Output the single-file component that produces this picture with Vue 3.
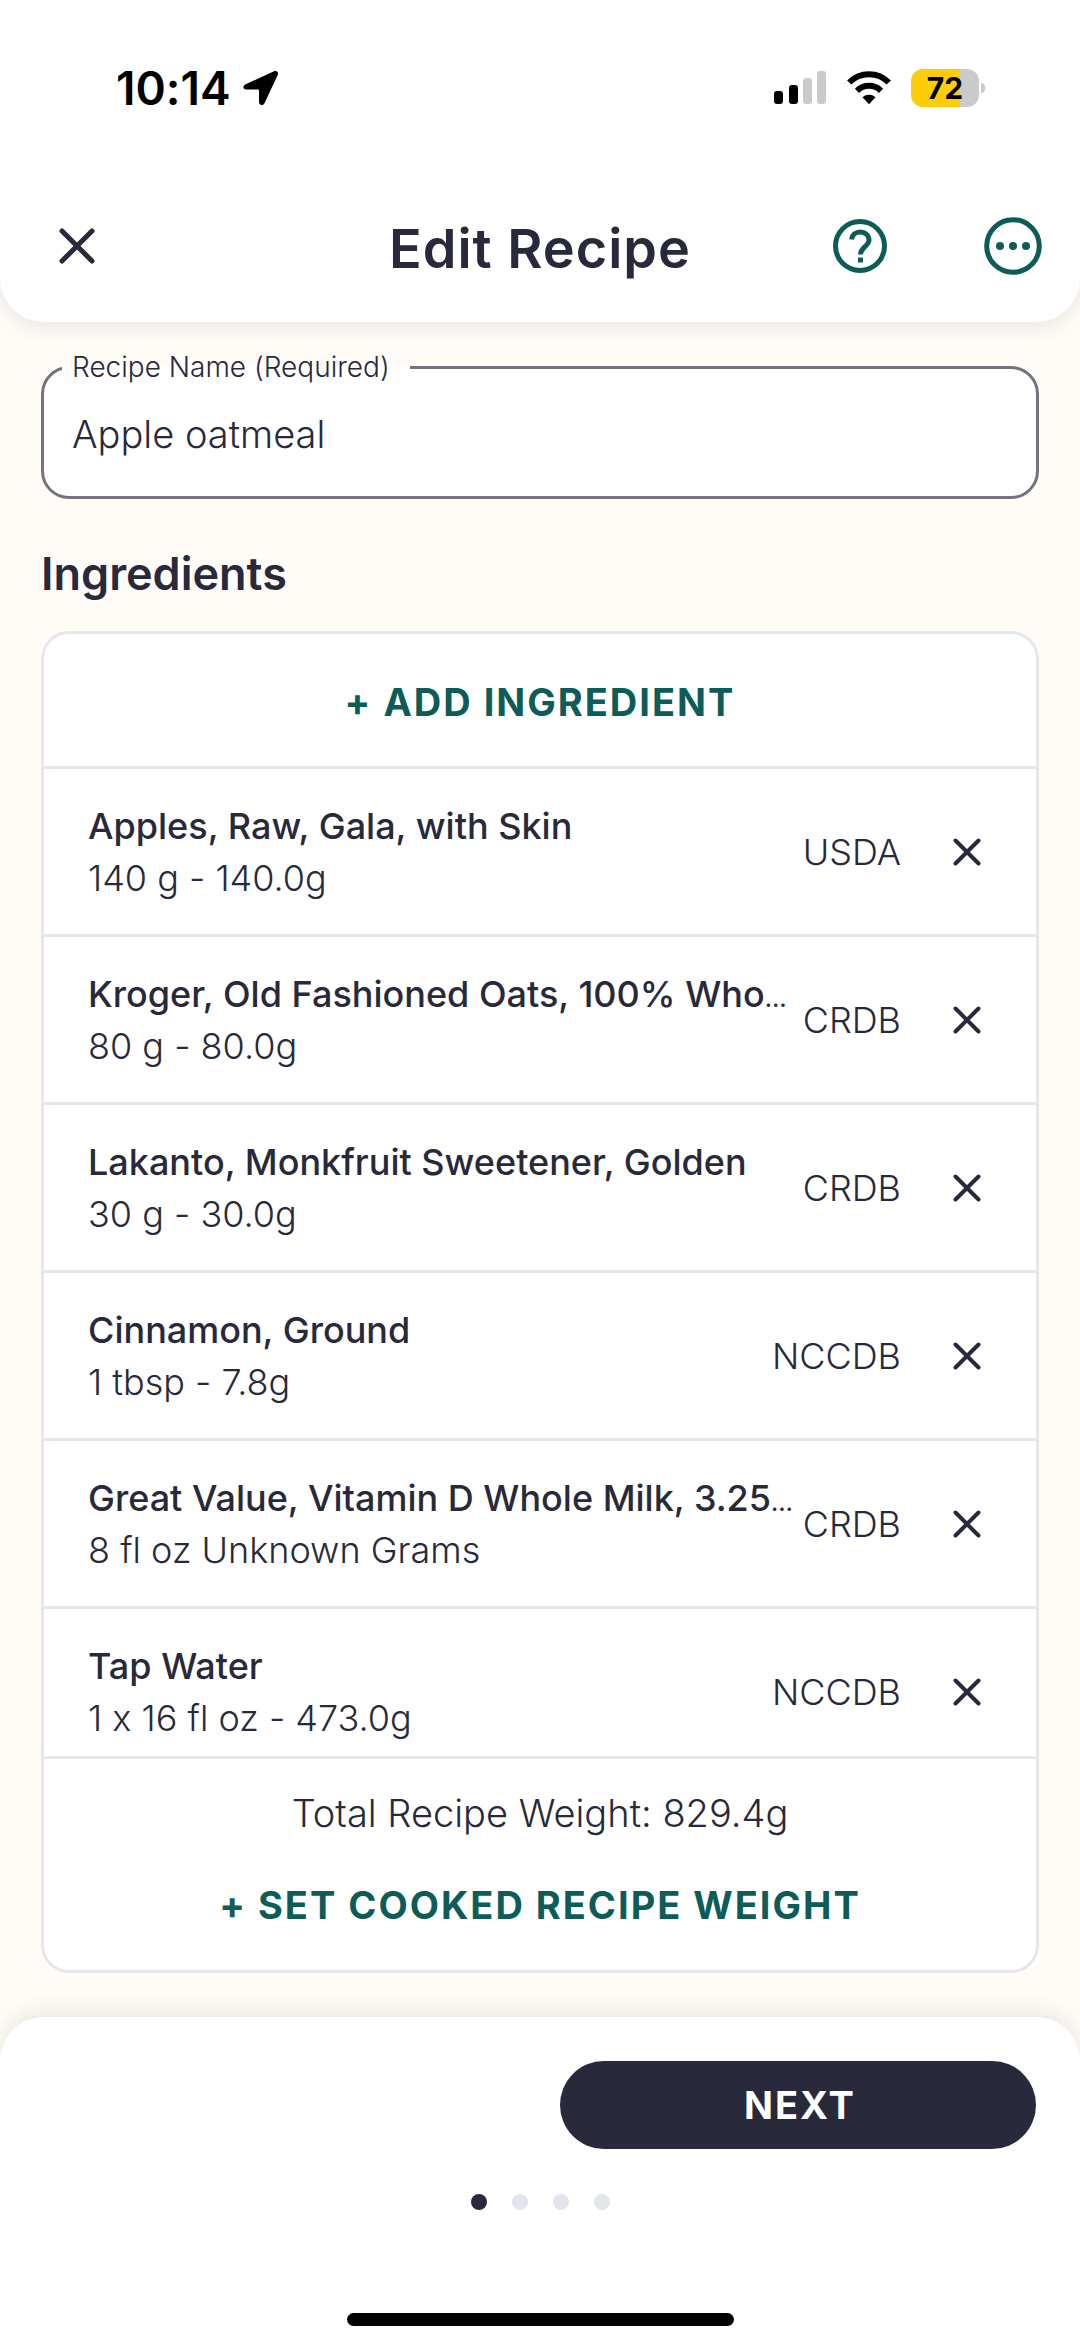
<script setup>
import { ref } from 'vue'

const recipeName = ref('Apple oatmeal')
const steps = 4
const currentStep = ref(1)
const ingredients = ref([
  { name: 'Apples, Raw, Gala, with Skin', amount: '140 g - 140.0g', source: 'USDA' },
  { name: 'Kroger, Old Fashioned Oats, 100% Who', cut: true, amount: '80 g - 80.0g', source: 'CRDB' },
  { name: 'Lakanto, Monkfruit Sweetener, Golden', amount: '30 g - 30.0g', source: 'CRDB' },
  { name: 'Cinnamon, Ground', amount: '1 tbsp - 7.8g', source: 'NCCDB' },
  { name: 'Great Value, Vitamin D Whole Milk, 3.25', cut: true, amount: '8 fl oz Unknown Grams', source: 'CRDB' },
  { name: 'Tap Water', amount: '1 x 16 fl oz - 473.0g', source: 'NCCDB' }
])

function remove(index) {
  ingredients.value.splice(index, 1)
}
</script>

<template>
  <div class="screen">
    <header class="top">
      <div class="status">
        <div class="clock">
          <span>10:14</span>
          <svg width="36" height="36" viewBox="0 0 36 36" aria-hidden="true">
            <path d="M31 1.3 2.2 14.4C-.6 15.8 0 19.6 3.200 19.600H15.200Q16 19.600 16 20.400V32C16 35.600 20.200 36 21.500 33.300L34.700 5C36 2.200 33.800 0 31 1.300Z" />
          </svg>
        </div>
        <div class="signals">
          <svg width="53" height="34" viewBox="0 0 53 34" aria-hidden="true">
            <rect x="0" y="20" width="9" height="13" rx="3" />
            <rect x="15" y="14" width="9" height="19" rx="3" />
            <rect class="off" x="29" y="7" width="9" height="26" rx="3" />
            <rect class="off" x="43" y="0" width="9" height="33" rx="3" />
          </svg>
          <svg width="44" height="34" viewBox="0 0 44 34" aria-hidden="true">
            <g class="arc">
              <path d="M2.200 11.500a28 28 0 0 1 39.600 0" />
              <path d="M10 19.800a17 17 0 0 1 24 0" />
            </g>
            <path d="M15.500 26.200a10 10 0 0 1 13 0L22 33.200Z" />
          </svg>
          <div class="battery"><span class="level">72</span><i class="nub"></i></div>
        </div>
      </div>
      <div class="bar">
        <button class="icon left" type="button" aria-label="Close">
          <svg width="38" height="38" viewBox="0 0 38 38"><path class="cross" d="M4 4 34 34M34 4 4 34" /></svg>
        </button>
        <h1>Edit Recipe</h1>
        <div class="actions">
          <button class="icon" type="button" aria-label="Help">
            <svg class="teal" width="58" height="58" viewBox="0 0 58 58">
              <circle cx="29" cy="29" r="24.500" />
              <path d="M20.500 22.500c.6-4.700 4.200-7.500 8.700-7.500 5 0 8.800 3.300 8.800 8 0 6-8.500 7.500-8.500 14.500" />
              <rect class="solid" x="27" y="40.500" width="5" height="5" />
            </svg>
          </button>
          <button class="icon" type="button" aria-label="More options">
            <svg class="teal" width="58" height="58" viewBox="0 0 58 58">
              <circle cx="29" cy="29" r="26.300" />
              <circle class="solid" cx="16" cy="29" r="4" />
              <circle class="solid" cx="29" cy="29" r="4" />
              <circle class="solid" cx="42" cy="29" r="4" />
            </svg>
          </button>
        </div>
      </div>
    </header>

    <main>
      <fieldset class="field">
        <legend><label for="recipe-name">Recipe Name (Required)</label></legend>
        <input id="recipe-name" v-model="recipeName" type="text" />
      </fieldset>

      <h2>Ingredients</h2>

      <section class="card">
        <button class="link add" type="button">+ ADD INGREDIENT</button>
        <ul>
          <li v-for="(item, i) in ingredients" :key="item.name">
            <div class="text">
              <div class="name">{{ item.name }}<span v-if="item.cut">…</span></div>
              <div class="amount">{{ item.amount }}</div>
            </div>
            <span class="source">{{ item.source }}</span>
            <button class="icon" type="button" :aria-label="'Remove ' + item.name" @click="remove(i)">
              <svg width="28" height="28" viewBox="0 0 28 28"><path class="cross" d="M2.500 2.500 25.500 25.500M25.500 2.500 2.500 25.500" /></svg>
            </button>
          </li>
        </ul>
        <p class="total">Total Recipe Weight: 829.4g</p>
        <button class="link cooked" type="button">+ SET COOKED RECIPE WEIGHT</button>
      </section>
    </main>

    <footer>
      <button class="next" type="button">NEXT</button>
      <div class="dots">
        <i v-for="n in steps" :key="n" :class="{ on: n === currentStep }"></i>
      </div>
      <div class="home"></div>
    </footer>
  </div>
</template>

<style>
body {
  margin: 0;
  background: #fffcf7;
}
</style>

<style scoped>
* {
  box-sizing: border-box;
}
.screen {
  display: flex;
  flex-direction: column;
  min-height: 100vh;
  background: #fffcf7;
  color: #28293a;
  font-family: Inter, Roboto, sans-serif;
  font-feature-settings: "calt" 0;
  font-size: 38px;
  font-weight: 300;
}
button {
  border: 0;
  padding: 0;
  background: none;
  color: inherit;
  font: inherit;
  cursor: pointer;
}
svg {
  display: block;
}
.top {
  padding-bottom: 36px;
  border-radius: 0 0 44px 44px;
  background: #fff;
  box-shadow: 0 6px 20px rgba(60, 40, 40, 0.1);
}
.status {
  display: flex;
  align-items: center;
  justify-content: space-between;
  height: 176px;
  padding: 0 101px 0 116px;
  color: #000;
}
.clock {
  display: flex;
  align-items: center;
  gap: 12px;
  font-size: 46px;
  font-weight: 600;
}
.signals {
  display: flex;
  align-items: center;
  gap: 20px;
}
.off {
  fill: #cacaca;
}
.arc {
  fill: none;
  stroke: #000;
  stroke-width: 6;
}
.battery {
  position: relative;
  width: 68px;
  height: 38px;
  border-radius: 12px;
  background: linear-gradient(90deg, #fdcc0a 72%, #cacaca 72%);
}
.level {
  display: block;
  line-height: 38px;
  text-align: center;
  font-size: 30px;
  font-weight: 700;
}
.nub {
  position: absolute;
  top: 14px;
  right: -6px;
  width: 4px;
  height: 10px;
  border-radius: 0 4px 4px 0;
  background: #cacaca;
}
.bar {
  display: grid;
  grid-template-columns: 1fr auto 1fr;
  align-items: center;
  height: 110px;
  padding: 29px 38px 0;
}
.left {
  justify-self: start;
  margin-left: 20px;
}
.cross {
  fill: none;
  stroke: #28293a;
  stroke-width: 5;
  stroke-linecap: round;
}
li .cross {
  stroke-width: 4;
}
h1 {
  margin: 0;
  padding-top: 6px;
  font-size: 54px;
  font-weight: 600;
  letter-spacing: 1px;
  line-height: 64px;
}
.actions {
  display: flex;
  justify-content: flex-end;
  gap: 95px;
}
.teal {
  fill: none;
  stroke: #0d5c58;
  stroke-width: 5;
}
.teal .solid {
  fill: #0d5c58;
  stroke: none;
}
main {
  display: flex;
  flex-direction: column;
  padding: 28px 41px 44px;
}
.field {
  min-width: 0;
  margin: 0;
  padding: 0 28px;
  border: 3px solid #73737d;
  border-radius: 28px;
  background: #fff;
}
legend {
  margin-left: -10px;
  padding: 0 20px 0 10px;
  font-size: 28px;
  line-height: 34px;
}
.field input {
  width: 100%;
  height: 112px;
  padding: 0 0 12px;
  border: 0;
  outline: 0;
  background: none;
  color: inherit;
  font: inherit;
}
h2 {
  margin: 49px 0 31px;
  font-size: 45px;
  font-weight: 600;
  line-height: 52px;
}
.card {
  display: flex;
  flex-direction: column;
  border: 3px solid #e6e7eb;
  border-radius: 28px;
  background: #fff;
}
.link {
  color: #0d5c58;
  font-weight: 700;
  letter-spacing: 2px;
}
.add {
  height: 132px;
  padding-top: 3px;
}
ul {
  margin: 0;
  padding: 0;
  border-bottom: 3px solid #e6e7eb;
  font-size: 36px;
  list-style: none;
}
li {
  display: flex;
  align-items: center;
  padding: 31px 55px 30px 44px;
  border-top: 3px solid #e6e7eb;
}
li:last-child {
  padding-bottom: 12px;
}
.text {
  flex: 1;
  min-width: 0;
  line-height: 52px;
  white-space: nowrap;
}
.name {
  font-weight: 500;
}
.name span {
  font-size: 24px;
  line-height: 1;
}
.source {
  margin-right: 52px;
}
.total {
  margin: 28px 0 0;
  text-align: center;
  line-height: 52px;
}
.cooked {
  height: 52px;
  margin: 40px 0 39px;
}
footer {
  display: flex;
  flex: 1;
  flex-direction: column;
  align-items: center;
  padding: 44px;
  padding-bottom: 22px;
  border-radius: 44px 44px 0 0;
  background: #fff;
  box-shadow: 0 -6px 20px rgba(60, 40, 40, 0.1);
}
.next {
  align-self: flex-end;
  width: 48%;
  height: 88px;
  padding-left: 4px;
  border-radius: 44px;
  background: #28293a;
  color: #fff;
  font-weight: 700;
  letter-spacing: 2px;
}
.dots {
  display: flex;
  gap: 25px;
  margin-top: 45px;
}
.dots i {
  width: 16px;
  height: 16px;
  border-radius: 50%;
  background: #e3e5ec;
}
.dots .on {
  background: #28293a;
}
.home {
  width: 387px;
  height: 13px;
  margin-top: auto;
  border-radius: 7px;
  background: #000;
}
</style>
